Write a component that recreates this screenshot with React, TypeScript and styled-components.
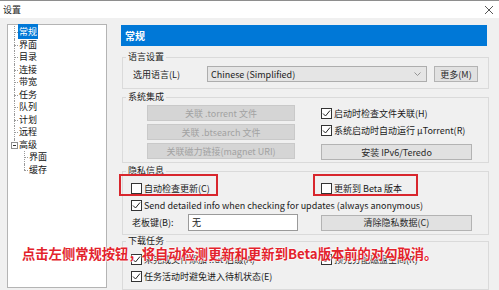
import React from 'react';
import styled, { createGlobalStyle } from 'styled-components';

const GlobalStyle = createGlobalStyle`
  html, body {
    margin: 0;
    padding: 0;
    background: #f0f0f0;
  }
  body {
    font-family: "Noto Sans CJK SC", "Noto Sans", sans-serif;
    font-size: 9px;
    color: #1a1a1a;
  }
`;

const Window = styled.div`
  position: relative;
  width: 499px;
  height: 290px;
  overflow: hidden;
  box-sizing: border-box;
  border-top: 1px solid #8e8e8e;
  background: #f0f0f0;
  display: flex;
  flex-direction: column;
`;

const TitleBar = styled.div`
  height: 17px;
  flex: none;
  background: #fff;
  display: flex;
  align-items: center;
  justify-content: space-between;
  padding: 0 5px 0 3px;
  font-size: 9px;
  color: #222;
`;

const Body = styled.div`
  flex: 1;
  min-height: 0;
  display: flex;
  padding: 6px 0 0 7px;
`;

const TreeBox = styled.div`
  width: 100px;
  box-sizing: border-box;
  margin-bottom: 2px;
  background: #fff;
  border: 1px solid #b4b4b4;
`;

const TreeList = styled.ul`
  list-style: none;
  margin: 0;
  padding: 1px 0 0;
`;

const TreeRow = styled.li<{ $level: number; $last?: boolean }>`
  position: relative;
  height: 12.5px;
  line-height: 12.5px;
  padding-left: ${(p) => (p.$level === 1 ? 10 : 20)}px;
  color: #111;

  &::before {
    content: '';
    position: absolute;
    left: ${(p) => (p.$level === 1 ? 6 : 16)}px;
    top: 6px;
    width: 4px;
    border-top: 1px dotted #9a9a9a;
  }

  &::after {
    content: '';
    position: absolute;
    left: ${(p) => (p.$level === 1 ? 6 : 16)}px;
    top: 0;
    height: ${(p) => (p.$last ? '6px' : '100%')};
    border-left: 1px dotted #9a9a9a;
  }
`;

const TreeLabel = styled.span<{ $selected?: boolean }>`
  padding: 1px 1px;
  background: ${(p) => (p.$selected ? '#0078d7' : 'transparent')};
  color: ${(p) => (p.$selected ? '#fff' : 'inherit')};
`;

const Expander = styled.span`
  position: absolute;
  z-index: 1;
  left: 3px;
  top: 3px;
  width: 7px;
  height: 7px;
  box-sizing: border-box;
  border: 1px solid #8f8f8f;
  background: #fff;

  &::before {
    content: '';
    position: absolute;
    left: 1px;
    right: 1px;
    top: 2px;
    border-top: 1px solid #333;
  }
`;

const Main = styled.div`
  width: 368px;
  margin: 1px 0 0 14px;
  display: flex;
  flex-direction: column;
`;

const Header = styled.div`
  height: 21px;
  margin-right: 2px;
  background: #0078d7;
  color: #fff;
  font-size: 10px;
  font-weight: 700;
  line-height: 21px;
  padding-left: 4px;
`;

const Group = styled.fieldset<{ $mt: number; $pb: number }>`
  margin: ${(p) => p.$mt}px 0 0 1px;
  padding: 0 0 ${(p) => p.$pb}px 8px;
  min-width: 0;
  border: 1px solid #dadada;
`;

const Legend = styled.legend`
  margin-left: -5px;
  padding: 0 2px;
  font-size: 9px;
  line-height: 12px;
  color: #222;
`;

const Row = styled.div<{ $mt?: number; $h: number }>`
  display: flex;
  align-items: center;
  height: ${(p) => p.$h}px;
  margin-top: ${(p) => p.$mt ?? 0}px;
`;

const FieldLabel = styled.span<{ $w: number; $pl?: number }>`
  width: ${(p) => p.$w}px;
  padding-left: ${(p) => p.$pl ?? 0}px;
  flex: none;
`;

const Select = styled.div`
  width: 220px;
  height: 16px;
  box-sizing: border-box;
  border: 1px solid #adadad;
  background: #e5e5e5;
  display: flex;
  align-items: center;
  justify-content: space-between;
  padding: 0 5px 0 3px;
  color: #222;
`;

const Button = styled.div<{ $w: number; $h?: number; $disabled?: boolean }>`
  width: ${(p) => p.$w}px;
  height: ${(p) => p.$h ?? 16}px;
  box-sizing: border-box;
  flex: none;
  display: flex;
  align-items: center;
  justify-content: center;
  border: 1px solid ${(p) => (p.$disabled ? '#c9c9c9' : '#b3b3b3')};
  background: ${(p) => (p.$disabled ? '#d5d5d5' : '#e1e1e1')};
  color: ${(p) => (p.$disabled ? '#a2a2a2' : '#2a2a2a')};
`;

const Columns = styled.div`
  display: grid;
  grid-template-columns: 190px 1fr;
`;

const Col = styled.div<{ $pl?: number; $gap?: number; $mt?: number }>`
  display: flex;
  flex-direction: column;
  gap: ${(p) => p.$gap ?? 0}px;
  padding-left: ${(p) => p.$pl ?? 0}px;
  margin-top: ${(p) => p.$mt ?? 0}px;
`;

const Wide = styled.div`
  grid-column: 1 / span 2;
`;

const CheckRow = styled.label<{ $h: number }>`
  display: flex;
  align-items: center;
  gap: 2px;
  height: ${(p) => p.$h}px;
  white-space: nowrap;
`;

const Box = styled.span`
  width: 11px;
  height: 11px;
  box-sizing: border-box;
  flex: none;
  border: 1px solid #333;
  background: #fff;
  display: flex;
  align-items: center;
  justify-content: center;
`;

const Marked = styled.div<{ $left: number; $w: number }>`
  position: relative;

  &::after {
    content: '';
    position: absolute;
    top: -5px;
    left: ${(p) => p.$left}px;
    width: ${(p) => p.$w}px;
    height: 22px;
    box-sizing: border-box;
    border: 2px solid #d8262d;
    pointer-events: none;
  }
`;

const Input = styled.div`
  width: 110px;
  height: 17px;
  box-sizing: border-box;
  border: 1px solid #9a9a9a;
  background: #fff;
  padding-left: 3px;
  line-height: 15px;
`;

const Note = styled.div`
  position: absolute;
  left: 22px;
  top: 244px;
  font-size: 13.3px;
  line-height: 18px;
  font-weight: 700;
  color: #e3232c;
  white-space: nowrap;
  text-shadow: 0 0 2px #fff, 0 0 2px #fff, 0 0 1px #fff;
`;

const Check = ({ on, label, h = 17 }: { on?: boolean; label: string; h?: number }) => (
  <CheckRow $h={h}>
    <Box>
      {on && (
        <svg width="9" height="9" viewBox="0 0 9 9">
          <polyline points="1,4.5 3.5,7 8,1.5" fill="none" stroke="#222" strokeWidth="1" />
        </svg>
      )}
    </Box>
    <span>{label}</span>
  </CheckRow>
);

const tree: { label: string; level: number; last?: boolean; selected?: boolean; open?: boolean }[] = [
  { label: '常规', level: 1, selected: true },
  { label: '界面', level: 1 },
  { label: '目录', level: 1 },
  { label: '连接', level: 1 },
  { label: '带宽', level: 1 },
  { label: '任务', level: 1 },
  { label: '队列', level: 1 },
  { label: '计划', level: 1 },
  { label: '远程', level: 1 },
  { label: '高级', level: 1, last: true, open: true },
  { label: '界面', level: 2 },
  { label: '缓存', level: 2, last: true },
];

const App = () => (
  <Window>
    <GlobalStyle />
    <TitleBar>
      <span>设置</span>
      <svg width="10" height="10" viewBox="0 0 10 10">
        <path d="M1 1 L9 9 M9 1 L1 9" stroke="#444" strokeWidth="0.9" />
      </svg>
    </TitleBar>
    <Body>
      <TreeBox>
        <TreeList>
          {tree.map((t, i) => (
            <TreeRow key={i} $level={t.level} $last={t.last}>
              {t.open && <Expander />}
              <TreeLabel $selected={t.selected}>{t.label}</TreeLabel>
            </TreeRow>
          ))}
        </TreeList>
      </TreeBox>
      <Main>
        <Header>常规</Header>

        <Group $mt={5} $pb={6}>
          <Legend>语言设置</Legend>
          <Row $h={16} $mt={3}>
            <FieldLabel $w={74} $pl={2}>选用语言(L)</FieldLabel>
            <Select>
              <span>Chinese (Simplified)</span>
              <svg width="7" height="4" viewBox="0 0 7 4">
                <polyline points="0.5,0.5 3.5,3.5 6.5,0.5" fill="none" stroke="#8a8a8a" strokeWidth="0.9" />
              </svg>
            </Select>
            <Button $w={44} style={{ marginLeft: 7 }}>更多(M)</Button>
          </Row>
        </Group>

        <Group $mt={2} $pb={2}>
          <Legend>系统集成</Legend>
          <Columns>
            <Col $pl={16} $gap={3} $mt={2}>
              <Button $w={148} $disabled>关联 .torrent 文件</Button>
              <Button $w={148} $disabled>关联 .btsearch 文件</Button>
              <Button $w={148} $disabled>关联磁力链接(magnet URI)</Button>
            </Col>
            <Col $mt={2}>
              <Check on label="启动时检查文件关联(H)" />
              <Check on label="系统启动时自动运行 µTorrent(R)" />
              <Button $w={151} style={{ marginTop: 5 }}>安装 IPv6/Teredo</Button>
            </Col>
          </Columns>
        </Group>

        <Group $mt={2} $pb={3}>
          <Legend>隐私信息</Legend>
          <Columns style={{ marginTop: 2 }}>
            <Marked $left={-12} $w={99}>
              <Check label="自动检查更新(C)" h={18} />
            </Marked>
            <Marked $left={-8} $w={105}>
              <Check label="更新到 Beta 版本" h={18} />
            </Marked>
            <Wide>
              <Check on label="Send detailed info when checking for updates (always anonymous)" />
            </Wide>
            <Row $h={17}>
              <FieldLabel $w={56} $pl={1}>老板键(B):</FieldLabel>
              <Input>无</Input>
            </Row>
            <Row $h={17}>
              <Button $w={151}>清除隐私数据(C)</Button>
            </Row>
          </Columns>
        </Group>

        <Group $mt={0} $pb={4}>
          <Legend>下载任务</Legend>
          <Columns style={{ marginTop: 4 }}>
            <Check on label="未完成文件添加 .!ut 后缀(A)" />
            <Check on label="预先分配磁盘空间(R)" />
            <Check on label="任务活动时避免进入待机状态(E)" />
          </Columns>
        </Group>
      </Main>
    </Body>
    <Note>点击左侧常规按钮，将自动检测更新和更新到Beta版本前的对勾取消。</Note>
  </Window>
);

export default App;
